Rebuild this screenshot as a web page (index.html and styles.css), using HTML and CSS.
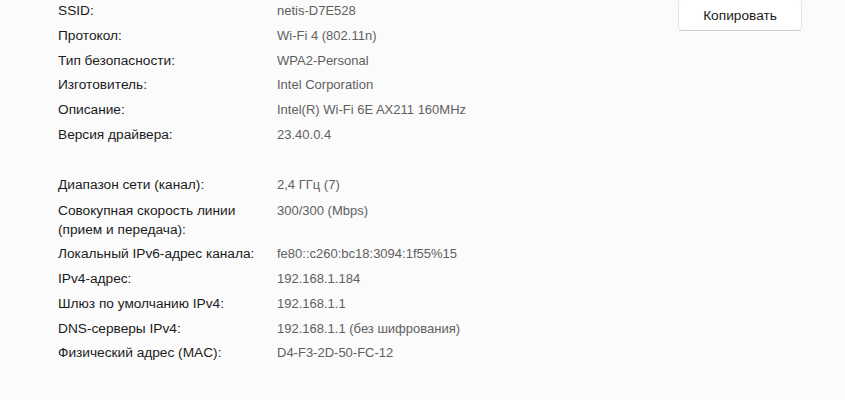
FILE: index.html
```html
<!DOCTYPE html>
<html lang="ru">
<head>
<meta charset="utf-8">
<link rel="stylesheet" href="styles.css">
</head>
<body>
<div class="page">
  <div class="props">
    <div class="label">SSID:</div><div class="value">netis-D7E528</div>
    <div class="label">Протокол:</div><div class="value">Wi-Fi 4 (802.11n)</div>
    <div class="label">Тип безопасности:</div><div class="value">WPA2-Personal</div>
    <div class="label">Изготовитель:</div><div class="value">Intel Corporation</div>
    <div class="label">Описание:</div><div class="value">Intel(R) Wi-Fi 6E AX211 160MHz</div>
    <div class="label">Версия драйвера:</div><div class="value">23.40.0.4</div>
    <div class="spacer"></div>
    <div class="label">Диапазон сети (канал):</div><div class="value">2,4 ГГц (7)</div>
    <div class="label tall">Совокупная скорость линии (прием и передача):</div><div class="value tall">300/300 (Mbps)</div>
    <div class="label">Локальный IPv6-адрес канала:</div><div class="value">fe80::c260:bc18:3094:1f55%15</div>
    <div class="label">IPv4-адрес:</div><div class="value">192.168.1.184</div>
    <div class="label">Шлюз по умолчанию IPv4:</div><div class="value">192.168.1.1</div>
    <div class="label">DNS-серверы IPv4:</div><div class="value">192.168.1.1 (без шифрования)</div>
    <div class="label">Физический адрес (MAC):</div><div class="value">D4-F3-2D-50-FC-12</div>
  </div>
  <div class="actions">
    <button class="btn">Копировать</button>
  </div>
</div>
</body>
</html>
```
FILE: styles.css
```css
html, body {
  margin: 0;
  padding: 0;
  background: #fbfbfb;
}
body {
  font-family: "Liberation Sans", Arial, sans-serif;
  font-size: 13px;
  width: 845px;
  height: 400px;
  overflow: hidden;
}
.page {
  display: flex;
  justify-content: space-between;
  padding: 0 43px 0 58px;
}
.props {
  display: grid;
  grid-template-columns: 219px auto;
  row-gap: 4.8px;
  line-height: 20px;
  margin-top: 1px;
}
.label {
  color: #1b1b1b;
  font-size: 13.7px;
  padding-right: 16px;
}
.label.tall {
  line-height: 19px;
  padding-top: 2px;
}
.value {
  color: #5f5f5f;
}
.value.tall {
  padding-top: 2px;
}
.spacer {
  grid-column: 1 / span 2;
  height: 20px;
}
.btn {
  display: block;
  width: 124px;
  height: 32px;
  margin-top: -1px;
  background: #ffffff;
  border: 1px solid #e5e5e5;
  border-bottom-color: #cccccc;
  border-radius: 4px;
  font-family: "Liberation Sans", Arial, sans-serif;
  font-size: 13.7px;
  color: #1b1b1b;
  padding: 0;
}
```
